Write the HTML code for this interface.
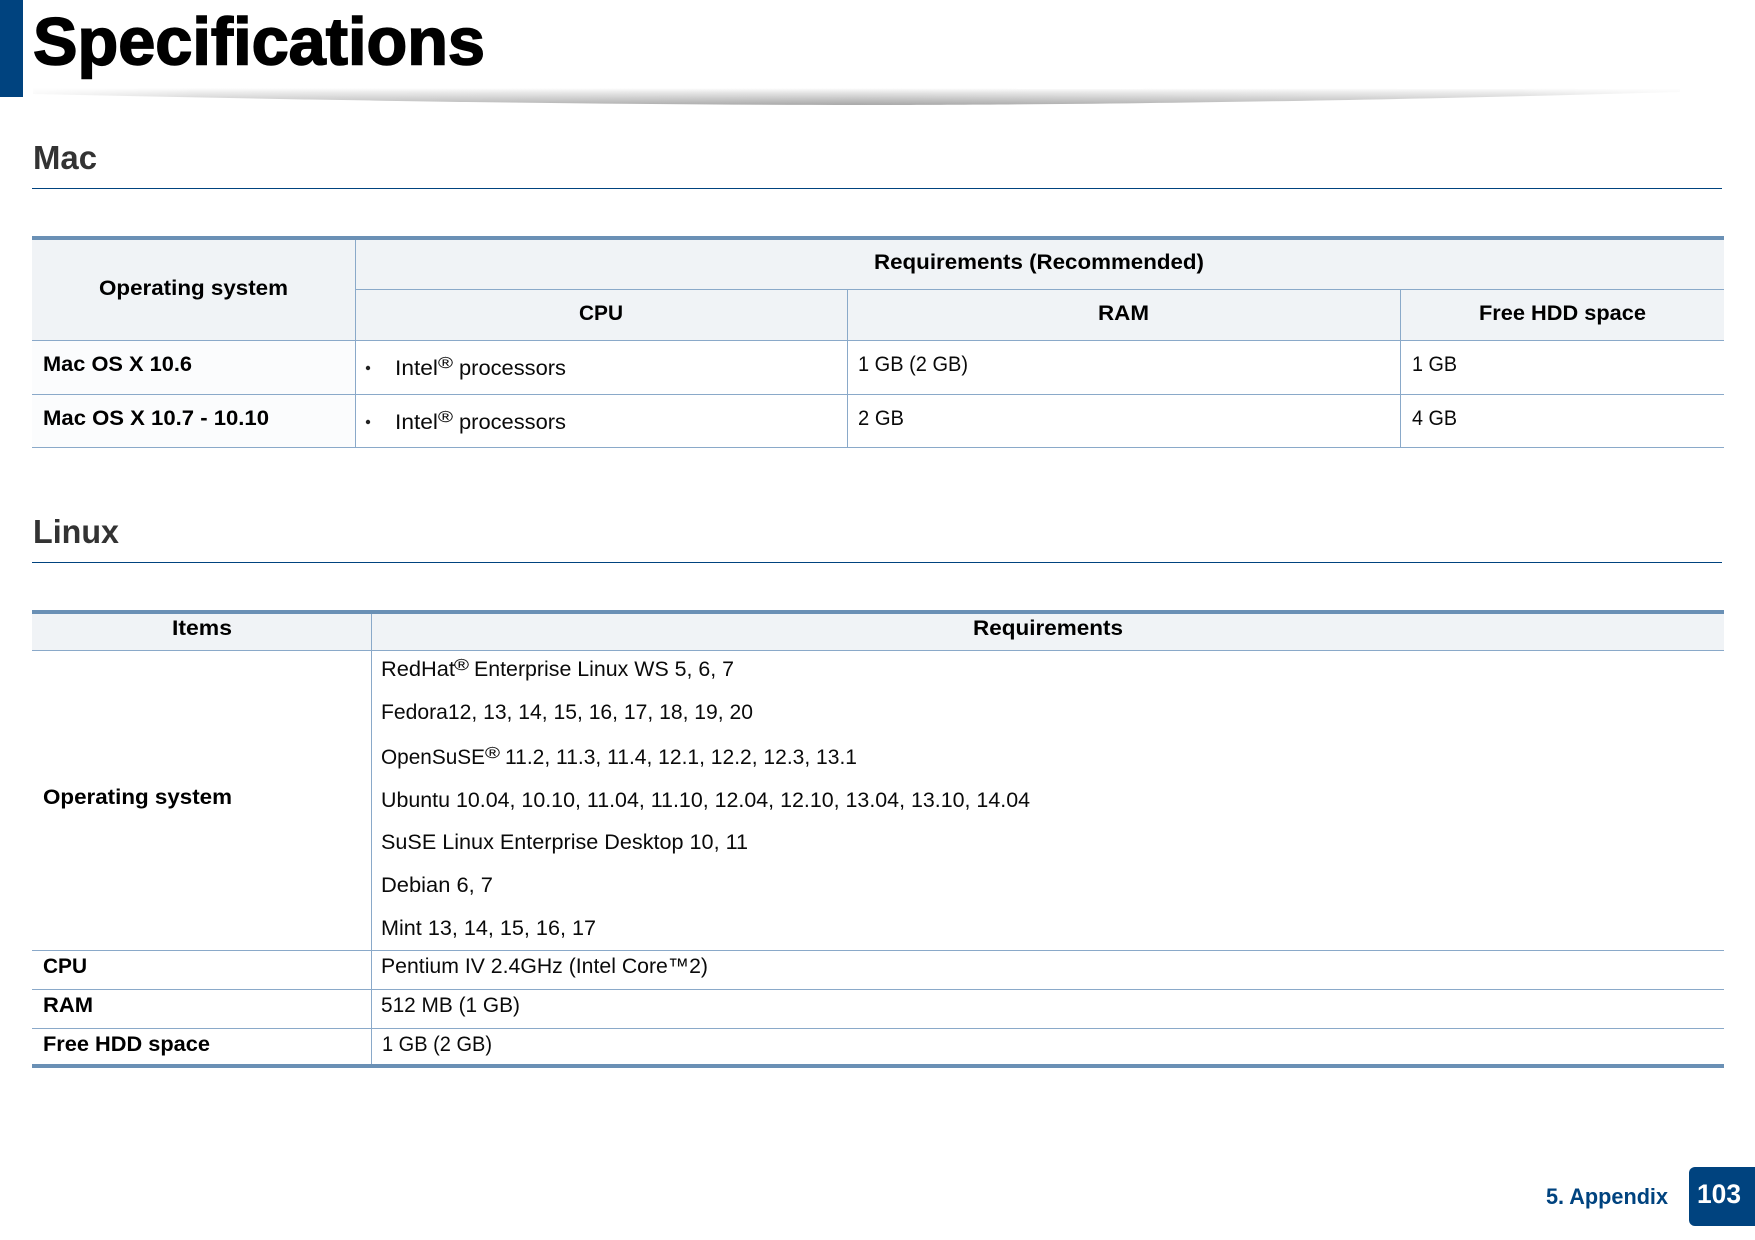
<!DOCTYPE html>
<html lang="en"><head><meta charset="utf-8"><title>Specifications</title>
<style>
html,body{margin:0;padding:0;background:#fff;width:1755px;height:1240px;overflow:hidden}
svg{display:block}
text{font-family:"Liberation Sans",sans-serif;fill:#0a0a0a;font-size:21px}
.b{font-weight:700;fill:#000}
.r{font-size:16px;stroke:#0a0a0a;stroke-width:.08}
</style></head><body>
<svg width="1755" height="1240" viewBox="0 0 1755 1240" xmlns="http://www.w3.org/2000/svg">
<defs>
<linearGradient id="v" gradientUnits="userSpaceOnUse" x1="0" y1="88" x2="0" y2="104"><stop offset="0" stop-color="#fff"/><stop offset=".3" stop-color="#e2e2e2"/><stop offset="1" stop-color="#a8a8a8"/></linearGradient>
<linearGradient id="h" x1="0" x2="1" y1="0" y2="0"><stop offset="0" stop-color="#fff" stop-opacity=".85"/><stop offset=".1" stop-color="#fff" stop-opacity=".3"/><stop offset=".5" stop-color="#fff" stop-opacity=".05"/><stop offset=".9" stop-color="#fff" stop-opacity=".3"/><stop offset="1" stop-color="#fff" stop-opacity=".85"/></linearGradient>
</defs>
<rect width="1755" height="1240" fill="#fff"/>
<rect x="0" y="0" width="23" height="97" fill="#00437f"/>
<path d="M33 88 L1680 89 L1680 92 C1300 103 1000 105 860 105 C600 105 300 100 33 94Z" fill="url(#v)"/>
<rect x="33" y="86" width="1647" height="22" fill="url(#h)"/>
<text class="b" x="33" y="64.5" style="font-size:67px;stroke:#000;stroke-width:1.6" textLength="452" lengthAdjust="spacingAndGlyphs">Specifications</text>

<!-- Mac -->
<text class="b" x="33" y="169" style="font-size:33px;fill:#333" textLength="64" lengthAdjust="spacingAndGlyphs">Mac</text>
<rect x="32" y="188" width="1690" height="1" fill="#00437f"/>

<rect x="32" y="240" width="1692" height="100" fill="#f0f3f6"/>
<rect x="32" y="341" width="323" height="106" fill="#fbfcfd"/>
<rect x="32" y="236" width="1692" height="4" fill="#6a90b5"/>
<g fill="#8aa9c9">
<rect x="355" y="289" width="1369" height="1"/>
<rect x="32" y="340" width="1692" height="1"/>
<rect x="32" y="394" width="1692" height="1"/>
<rect x="32" y="447" width="1692" height="1"/>
<rect x="355" y="240" width="1" height="207"/>
<rect x="847" y="289" width="1" height="158"/>
<rect x="1400" y="289" width="1" height="158"/>
</g>
<text class="b" x="99" y="295" textLength="189" lengthAdjust="spacingAndGlyphs">Operating system</text>
<text class="b" x="874" y="269" textLength="330" lengthAdjust="spacingAndGlyphs">Requirements (Recommended)</text>
<text class="b" x="579" y="320" textLength="44" lengthAdjust="spacingAndGlyphs">CPU</text>
<text class="b" x="1098" y="320" textLength="51" lengthAdjust="spacingAndGlyphs">RAM</text>
<text class="b" x="1479" y="320" textLength="167" lengthAdjust="spacingAndGlyphs">Free HDD space</text>

<text class="b" x="43" y="371" textLength="149" lengthAdjust="spacingAndGlyphs">Mac OS X 10.6</text>
<circle cx="368" cy="368" r="2.2" fill="#222"/>
<text x="395" y="375" textLength="43" lengthAdjust="spacingAndGlyphs">Intel</text>
<text class="r" x="438" y="368" textLength="15" lengthAdjust="spacingAndGlyphs">®</text>
<text x="459" y="375" textLength="107" lengthAdjust="spacingAndGlyphs">processors</text>
<text x="858" y="371" textLength="110" lengthAdjust="spacingAndGlyphs">1 GB (2 GB)</text>
<text x="1412" y="371" textLength="45" lengthAdjust="spacingAndGlyphs">1 GB</text>

<text class="b" x="43" y="425" textLength="226" lengthAdjust="spacingAndGlyphs">Mac OS X 10.7 - 10.10</text>
<circle cx="368" cy="422" r="2.2" fill="#222"/>
<text x="395" y="429" textLength="43" lengthAdjust="spacingAndGlyphs">Intel</text>
<text class="r" x="438" y="422" textLength="15" lengthAdjust="spacingAndGlyphs">®</text>
<text x="459" y="429" textLength="107" lengthAdjust="spacingAndGlyphs">processors</text>
<text x="858" y="425" textLength="46" lengthAdjust="spacingAndGlyphs">2 GB</text>
<text x="1412" y="425" textLength="45" lengthAdjust="spacingAndGlyphs">4 GB</text>

<!-- Linux -->
<text class="b" x="33" y="543" style="font-size:33px;fill:#333" textLength="86" lengthAdjust="spacingAndGlyphs">Linux</text>
<rect x="32" y="562" width="1690" height="1" fill="#00437f"/>

<rect x="32" y="614" width="1692" height="37" fill="#f0f3f6"/>
<rect x="32" y="610" width="1692" height="4" fill="#6a90b5"/>
<rect x="32" y="1064" width="1692" height="4" fill="#6a90b5"/>
<g fill="#8aa9c9">
<rect x="32" y="650" width="1692" height="1"/>
<rect x="32" y="950" width="1692" height="1"/>
<rect x="32" y="989" width="1692" height="1"/>
<rect x="32" y="1028" width="1692" height="1"/>
<rect x="371" y="614" width="1" height="450"/>
</g>
<text class="b" x="172" y="635" textLength="60" lengthAdjust="spacingAndGlyphs">Items</text>
<text class="b" x="973" y="635" textLength="150" lengthAdjust="spacingAndGlyphs">Requirements</text>

<text class="b" x="43" y="804" textLength="189" lengthAdjust="spacingAndGlyphs">Operating system</text>
<text x="381" y="676" textLength="74" lengthAdjust="spacingAndGlyphs">RedHat</text>
<text class="r" x="454" y="670" textLength="15" lengthAdjust="spacingAndGlyphs">®</text>
<text x="474" y="676" textLength="260" lengthAdjust="spacingAndGlyphs">Enterprise Linux WS 5, 6, 7</text>
<text x="381" y="719" textLength="372" lengthAdjust="spacingAndGlyphs">Fedora12, 13, 14, 15, 16, 17, 18, 19, 20</text>
<text x="381" y="764" textLength="104" lengthAdjust="spacingAndGlyphs">OpenSuSE</text>
<text class="r" x="485" y="758" textLength="15" lengthAdjust="spacingAndGlyphs">®</text>
<text x="505" y="764" textLength="352" lengthAdjust="spacingAndGlyphs">11.2, 11.3, 11.4, 12.1, 12.2, 12.3, 13.1</text>
<text x="381" y="807" textLength="649" lengthAdjust="spacingAndGlyphs">Ubuntu 10.04, 10.10, 11.04, 11.10, 12.04, 12.10, 13.04, 13.10, 14.04</text>
<text x="381" y="849" textLength="367" lengthAdjust="spacingAndGlyphs">SuSE Linux Enterprise Desktop 10, 11</text>
<text x="381" y="892" textLength="112" lengthAdjust="spacingAndGlyphs">Debian 6, 7</text>
<text x="381" y="935" textLength="215" lengthAdjust="spacingAndGlyphs">Mint 13, 14, 15, 16, 17</text>

<text class="b" x="43" y="973" textLength="44" lengthAdjust="spacingAndGlyphs">CPU</text>
<text x="381" y="973" textLength="327" lengthAdjust="spacingAndGlyphs">Pentium IV 2.4GHz (Intel Core™2)</text>
<text class="b" x="43" y="1012" textLength="50" lengthAdjust="spacingAndGlyphs">RAM</text>
<text x="381" y="1012" textLength="139" lengthAdjust="spacingAndGlyphs">512 MB (1 GB)</text>
<text class="b" x="43" y="1051" textLength="167" lengthAdjust="spacingAndGlyphs">Free HDD space</text>
<text x="382" y="1051" textLength="110" lengthAdjust="spacingAndGlyphs">1 GB (2 GB)</text>

<!-- Footer -->
<text class="b" x="1546" y="1204" style="font-size:22px;fill:#00437f" textLength="122" lengthAdjust="spacingAndGlyphs">5. Appendix</text>
<path d="M1695 1167H1755V1226H1695a6 6 0 0 1-6-6V1173a6 6 0 0 1 6-6Z" fill="#00437f"/>
<text class="b" x="1697" y="1203" style="font-size:27px;fill:#fff" textLength="44" lengthAdjust="spacingAndGlyphs">103</text>
</svg>
</body></html>
